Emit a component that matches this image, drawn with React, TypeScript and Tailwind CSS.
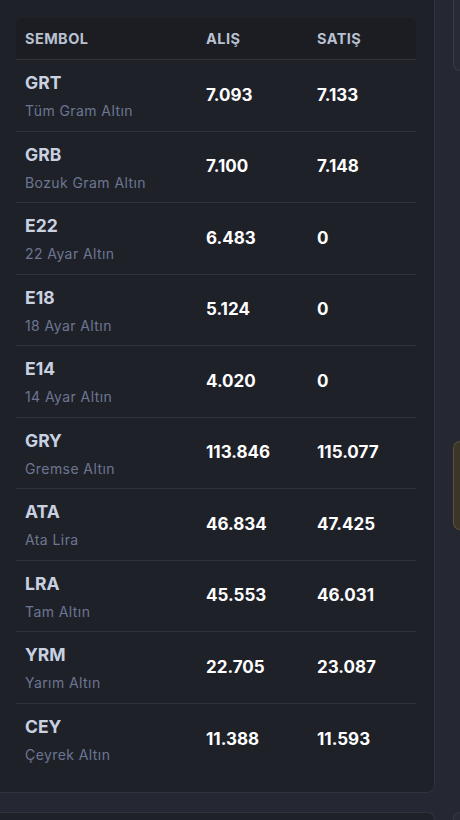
import React from "react";

const rows = [
  { s: "GRT", n: "Tüm Gram Altın", a: "7.093", b: "7.133" },
  { s: "GRB", n: "Bozuk Gram Altın", a: "7.100", b: "7.148" },
  { s: "E22", n: "22 Ayar Altın", a: "6.483", b: "0" },
  { s: "E18", n: "18 Ayar Altın", a: "5.124", b: "0" },
  { s: "E14", n: "14 Ayar Altın", a: "4.020", b: "0" },
  { s: "GRY", n: "Gremse Altın", a: "113.846", b: "115.077" },
  { s: "ATA", n: "Ata Lira", a: "46.834", b: "47.425" },
  { s: "LRA", n: "Tam Altın", a: "45.553", b: "46.031" },
  { s: "YRM", n: "Yarım Altın", a: "22.705", b: "23.087" },
  { s: "CEY", n: "Çeyrek Altın", a: "11.388", b: "11.593" },
];

export default function App() {
  return (
    <div
      className="w-[460px] h-[820px] overflow-hidden bg-[#252833] flex"
      style={{ fontFamily: "Inter, 'Noto Sans', sans-serif" }}
    >
      <div className="w-[435px] shrink-0 flex flex-col">
        <div className="bg-[#1f2129] border-b border-r border-[#30333d] rounded-br-lg pl-[16px] pr-[17px] pt-[18px] pb-[17px]">
          <div className="w-[400px]">
            <div className="grid grid-cols-[181px_111px_108px] h-[42px] items-center bg-[#1b1d23] rounded-t-md border-b border-[#30333d] text-[14.5px] font-bold text-[#b9c1d0] tracking-[0.03em]">
              <div className="pl-[9px]">SEMBOL</div>
              <div className="pl-[9px]">ALIŞ</div>
              <div className="pl-[9px]">SATIŞ</div>
            </div>
            {rows.map((r, i) => (
              <div
                key={r.s}
                className={`grid grid-cols-[181px_111px_108px] h-[71.5px] items-center ${
                  i < rows.length - 1 ? "border-b border-[#30333d]" : ""
                }`}
              >
                <div className="pl-[9px] flex flex-col pt-[2px]">
                  <span className="text-[17.5px] font-bold text-[#c9d1e1] leading-[22px]">{r.s}</span>
                  <span className="text-[14px] text-[#6c7691] leading-[18px] mt-[8px] tracking-[0.03em]">{r.n}</span>
                </div>
                <div className="pl-[9px] text-[17px] font-bold text-white">{r.a}</div>
                <div className="pl-[9px] text-[17px] font-bold text-white">{r.b}</div>
              </div>
            ))}
          </div>
        </div>
        <div className="mt-[19px] flex-1 bg-[#1f2129] border-t border-r border-[#30333d] rounded-tr-lg" />
      </div>
      <div className="flex-1 flex flex-col pl-[18px]">
        <div className="h-[71px] bg-[#272b36] border-l border-b border-[#363a46] rounded-bl-lg" />
        <div className="mt-[370px] h-[89px] bg-[#3a3629] border border-r-0 border-[#5e5130] rounded-l-lg" />
        <div className="mt-[282px] flex-1 bg-[#272b36] border-l border-t border-[#363a46] rounded-tl-lg" />
      </div>
    </div>
  );
}
